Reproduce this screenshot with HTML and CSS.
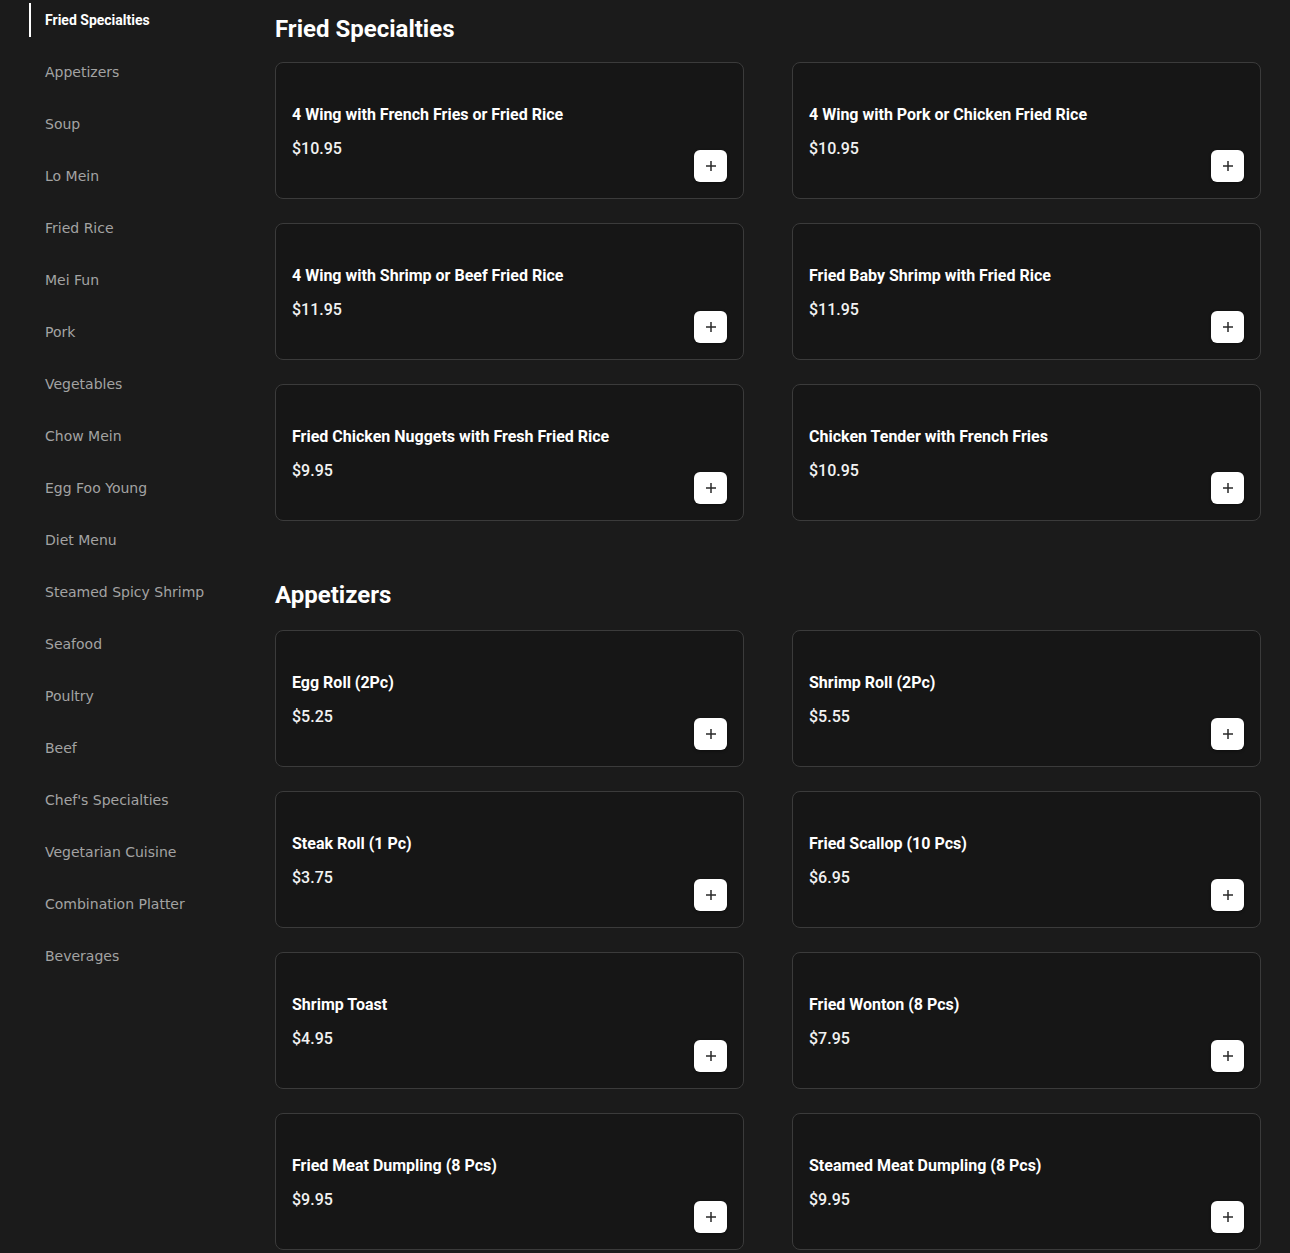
FILE: index.html
```html
<!DOCTYPE html>
<html lang="en">
<head>
<meta charset="utf-8">
<title>Menu</title>
<link rel="stylesheet" href="styles.css">
</head>
<body>
<div class="layout">
  <nav class="sidebar">
    <a class="nav-item active">Fried Specialties</a>
    <a class="nav-item">Appetizers</a>
    <a class="nav-item">Soup</a>
    <a class="nav-item">Lo Mein</a>
    <a class="nav-item">Fried Rice</a>
    <a class="nav-item">Mei Fun</a>
    <a class="nav-item">Pork</a>
    <a class="nav-item">Vegetables</a>
    <a class="nav-item">Chow Mein</a>
    <a class="nav-item">Egg Foo Young</a>
    <a class="nav-item">Diet Menu</a>
    <a class="nav-item">Steamed Spicy Shrimp</a>
    <a class="nav-item">Seafood</a>
    <a class="nav-item">Poultry</a>
    <a class="nav-item">Beef</a>
    <a class="nav-item">Chef's Specialties</a>
    <a class="nav-item">Vegetarian Cuisine</a>
    <a class="nav-item">Combination Platter</a>
    <a class="nav-item">Beverages</a>
  </nav>
  <main class="content">
    <section class="section">
      <h2 class="section-title">Fried Specialties</h2>
      <div class="grid">
        <div class="card"><div class="info"><div class="name">4 Wing with French Fries or Fried Rice</div><div class="price">$10.95</div></div><button class="add"><svg width="12" height="12" viewBox="0 0 12 12"><path d="M6 1v10M1 6h10" stroke="#2a2a2a" stroke-width="1.5"/></svg></button></div>
        <div class="card"><div class="info"><div class="name">4 Wing with Pork or Chicken Fried Rice</div><div class="price">$10.95</div></div><button class="add"><svg width="12" height="12" viewBox="0 0 12 12"><path d="M6 1v10M1 6h10" stroke="#2a2a2a" stroke-width="1.5"/></svg></button></div>
        <div class="card"><div class="info"><div class="name">4 Wing with Shrimp or Beef Fried Rice</div><div class="price">$11.95</div></div><button class="add"><svg width="12" height="12" viewBox="0 0 12 12"><path d="M6 1v10M1 6h10" stroke="#2a2a2a" stroke-width="1.5"/></svg></button></div>
        <div class="card"><div class="info"><div class="name">Fried Baby Shrimp with Fried Rice</div><div class="price">$11.95</div></div><button class="add"><svg width="12" height="12" viewBox="0 0 12 12"><path d="M6 1v10M1 6h10" stroke="#2a2a2a" stroke-width="1.5"/></svg></button></div>
        <div class="card"><div class="info"><div class="name">Fried Chicken Nuggets with Fresh Fried Rice</div><div class="price">$9.95</div></div><button class="add"><svg width="12" height="12" viewBox="0 0 12 12"><path d="M6 1v10M1 6h10" stroke="#2a2a2a" stroke-width="1.5"/></svg></button></div>
        <div class="card"><div class="info"><div class="name">Chicken Tender with French Fries</div><div class="price">$10.95</div></div><button class="add"><svg width="12" height="12" viewBox="0 0 12 12"><path d="M6 1v10M1 6h10" stroke="#2a2a2a" stroke-width="1.5"/></svg></button></div>
      </div>
    </section>
    <section class="section">
      <h2 class="section-title">Appetizers</h2>
      <div class="grid">
        <div class="card"><div class="info"><div class="name">Egg Roll (2Pc)</div><div class="price">$5.25</div></div><button class="add"><svg width="12" height="12" viewBox="0 0 12 12"><path d="M6 1v10M1 6h10" stroke="#2a2a2a" stroke-width="1.5"/></svg></button></div>
        <div class="card"><div class="info"><div class="name">Shrimp Roll (2Pc)</div><div class="price">$5.55</div></div><button class="add"><svg width="12" height="12" viewBox="0 0 12 12"><path d="M6 1v10M1 6h10" stroke="#2a2a2a" stroke-width="1.5"/></svg></button></div>
        <div class="card"><div class="info"><div class="name">Steak Roll (1 Pc)</div><div class="price">$3.75</div></div><button class="add"><svg width="12" height="12" viewBox="0 0 12 12"><path d="M6 1v10M1 6h10" stroke="#2a2a2a" stroke-width="1.5"/></svg></button></div>
        <div class="card"><div class="info"><div class="name">Fried Scallop (10 Pcs)</div><div class="price">$6.95</div></div><button class="add"><svg width="12" height="12" viewBox="0 0 12 12"><path d="M6 1v10M1 6h10" stroke="#2a2a2a" stroke-width="1.5"/></svg></button></div>
        <div class="card"><div class="info"><div class="name">Shrimp Toast</div><div class="price">$4.95</div></div><button class="add"><svg width="12" height="12" viewBox="0 0 12 12"><path d="M6 1v10M1 6h10" stroke="#2a2a2a" stroke-width="1.5"/></svg></button></div>
        <div class="card"><div class="info"><div class="name">Fried Wonton (8 Pcs)</div><div class="price">$7.95</div></div><button class="add"><svg width="12" height="12" viewBox="0 0 12 12"><path d="M6 1v10M1 6h10" stroke="#2a2a2a" stroke-width="1.5"/></svg></button></div>
        <div class="card"><div class="info"><div class="name">Fried Meat Dumpling (8 Pcs)</div><div class="price">$9.95</div></div><button class="add"><svg width="12" height="12" viewBox="0 0 12 12"><path d="M6 1v10M1 6h10" stroke="#2a2a2a" stroke-width="1.5"/></svg></button></div>
        <div class="card"><div class="info"><div class="name">Steamed Meat Dumpling (8 Pcs)</div><div class="price">$9.95</div></div><button class="add"><svg width="12" height="12" viewBox="0 0 12 12"><path d="M6 1v10M1 6h10" stroke="#2a2a2a" stroke-width="1.5"/></svg></button></div>
      </div>
    </section>
  </main>
</div>
</body>
</html>
```
FILE: styles.css
```css
* { box-sizing: border-box; }

html, body {
  margin: 0;
  background: #1b1b1b;
  color: #fff;
  font-family: Roboto, "Liberation Sans", sans-serif;
}

body {
  height: 1253px;
  overflow: hidden;
}

.layout {
  display: flex;
  gap: 24px;
  padding: 0 29px;
}

.sidebar {
  width: 222px;
  flex-shrink: 0;
  display: flex;
  flex-direction: column;
  gap: 18px;
  padding-top: 3px;
}

.nav-item {
  display: flex;
  align-items: center;
  height: 34px;
  padding-left: 14px;
  border-left: 2px solid transparent;
  font-family: "DejaVu Sans", sans-serif;
  font-size: 14px;
  color: #a3a3a3;
  white-space: nowrap;
}

.nav-item.active {
  border-left-color: #ffffff;
  color: #ffffff;
  font-family: Roboto, sans-serif;
  font-weight: 700;
}

.content {
  flex: 1;
  min-width: 0;
  display: flex;
  flex-direction: column;
  gap: 60px;
  padding-top: 13px;
}

.section-title {
  margin: 0 0 17px;
  font-size: 24px;
  line-height: 32px;
  font-weight: 700;
  color: #fff;
}

.section + .section .section-title {
  margin-top: -2px;
  margin-bottom: 19px;
}

.grid {
  display: grid;
  grid-template-columns: 1fr 1fr;
  column-gap: 48px;
  row-gap: 24px;
}

.card {
  height: 137px;
  padding: 16px;
  border: 1px solid #3b3b3b;
  border-radius: 8px;
  background: #161616;
  display: grid;
  grid-template-columns: 1fr auto;
}

.info {
  align-self: center;
  display: flex;
  flex-direction: column;
  gap: 10px;
  margin-top: 2px;
}

.name {
  font-size: 16px;
  line-height: 24px;
  font-weight: 700;
  color: #fff;
}

.price {
  font-size: 16px;
  line-height: 24px;
  font-weight: 500;
  color: #f2f2f2;
}

.add {
  align-self: end;
  width: 33px;
  height: 32px;
  padding: 0;
  border: none;
  border-radius: 6px;
  background: #fff;
  display: flex;
  align-items: center;
  justify-content: center;
  box-shadow: 0 1px 3px rgba(0,0,0,0.4);
}

.add svg { display: block; }
```
